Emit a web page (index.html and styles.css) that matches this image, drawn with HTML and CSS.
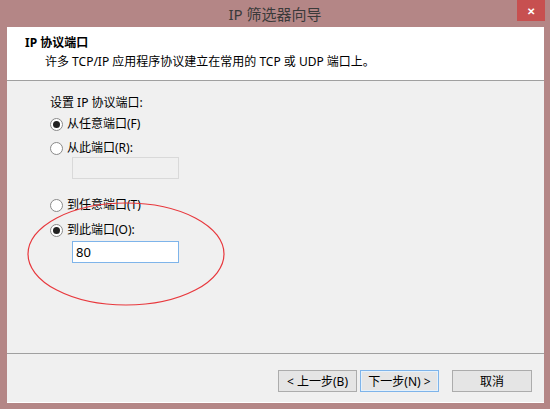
FILE: index.html
```html
<!DOCTYPE html>
<html lang="zh-CN">

<head>
    <meta charset="UTF-8">
    <meta name="viewport" content="width=device-width, initial-scale=1.0">
    <title>IP 筛选器向导</title>
    <link rel="stylesheet" href="styles.css">
</head>

<body>
    <div class="okno">
        <div class="pasek">
            <span class="tytul">IP 筛选器向导</span>
            <span class="zamknij">&#x2715;</span>
        </div>

        <div class="klient">
            <div class="naglowek">
                <p class="naglowek-tytul">IP 协议端口</p>
                <p class="naglowek-opis">许多 TCP/IP 应用程序协议建立在常用的 TCP 或 UDP 端口上。</p>
            </div>

            <div class="tresc">
                <p class="etykieta">设置 IP 协议端口:</p>

                <label class="opcja o1"><span class="radio wybrany"></span>从任意端口(F)</label>
                <label class="opcja o2"><span class="radio"></span>从此端口(R):</label>
                <div class="pole wylaczone"></div>

                <label class="opcja o3"><span class="radio"></span>到任意端口(T)</label>
                <label class="opcja o4"><span class="radio wybrany"></span>到此端口(O):</label>
                <div class="pole aktywne">80</div>
            </div>

            <div class="stopka">
                <button class="przycisk">&lt; 上一步(B)</button>
                <button class="przycisk domyslny">下一步(N) &gt;</button>
                <button class="przycisk anuluj">取消</button>
            </div>
        </div>

        <svg class="elipsa" width="550" height="409" viewBox="0 0 550 409">
            <ellipse cx="126" cy="254" rx="98" ry="51" fill="none" stroke="#e8383d" stroke-width="1.2"/>
        </svg>
    </div>
</body>

</html>
```

FILE: styles.css
```css
* {
    box-sizing: border-box;
}

body {
    margin: 0;
    background-color: #b48686;
    font-family: "Noto Sans", "Noto Sans CJK SC", sans-serif;
    font-size: 12px;
    color: #000;
}

p {
    margin: 0;
}

.okno {
    position: relative;
    width: 550px;
    height: 409px;
    display: flex;
    flex-direction: column;
}

.pasek {
    height: 27px;
    display: flex;
    align-items: center;
    justify-content: center;
    position: relative;
}

.tytul {
    font-size: 15px;
    color: #3a3a3a;
    margin-top: -1px;
}

.zamknij {
    position: absolute;
    top: 0;
    left: 517px;
    width: 28px;
    height: 21px;
    background-color: #c75050;
    color: #fff;
    font-size: 10px;
    font-weight: bold;
    display: flex;
    align-items: center;
    justify-content: center;
}

.klient {
    margin-left: 7px;
    width: 537px;
    height: 376px;
    background-color: #f0f0f0;
    display: flex;
    flex-direction: column;
    border-bottom: 1px solid #fff;
}

.naglowek {
    height: 54px;
    background-color: #fff;
    border-bottom: 1px solid #a0a0a0;
    padding: 8px 0 0 18px;
    line-height: 16px;
}

.naglowek-tytul {
    font-weight: bold;
}

.naglowek-opis {
    margin-top: 3px;
    padding-left: 20px;
}

.tresc {
    height: 273px;
    padding: 14px 0 0 43px;
    border-bottom: 1px solid #a0a0a0;
    line-height: 16px;
}

.opcja {
    display: flex;
    align-items: center;
    height: 16px;
}

.o1 { margin-top: 5px; }
.o2 { margin-top: 8px; }
.o3 { margin-top: 18px; }
.o4 { margin-top: 9px; }

.radio {
    width: 13px;
    height: 13px;
    border: 1px solid #8a8a8a;
    border-radius: 50%;
    background-color: #fff;
    margin-right: 4px;
    display: flex;
    align-items: center;
    justify-content: center;
}

.radio.wybrany::after {
    content: "";
    width: 7px;
    height: 7px;
    border-radius: 50%;
    background-color: #222;
}

.pole {
    width: 107px;
    height: 22px;
    margin-left: 22px;
    padding: 2px 3px;
}

.wylaczone {
    margin-top: 1px;
    border: 1px solid #d9d9d9;
    background-color: #f0f0f0;
}

.aktywne {
    margin-top: 3px;
    border: 1px solid #7eb4ea;
    background-color: #fff;
    font-size: 13px;
}

.stopka {
    flex: 1;
    display: flex;
    align-items: flex-start;
    padding: 16px 0 0 271px;
}

.przycisk {
    width: 79px;
    height: 22px;
    border: 1px solid #acacac;
    background-color: #e5e5e5;
    font-family: inherit;
    font-size: 12px;
    padding: 0;
    margin-right: 3px;
}

.domyslny {
    border: 1px solid #7eb4ea;
    margin-right: 13px;
    box-shadow: inset 0 0 0 1px #e5f1fb;
}

.anuluj {
    width: 80px;
}

.elipsa {
    position: absolute;
    left: 0;
    top: 0;
    pointer-events: none;
}
```
